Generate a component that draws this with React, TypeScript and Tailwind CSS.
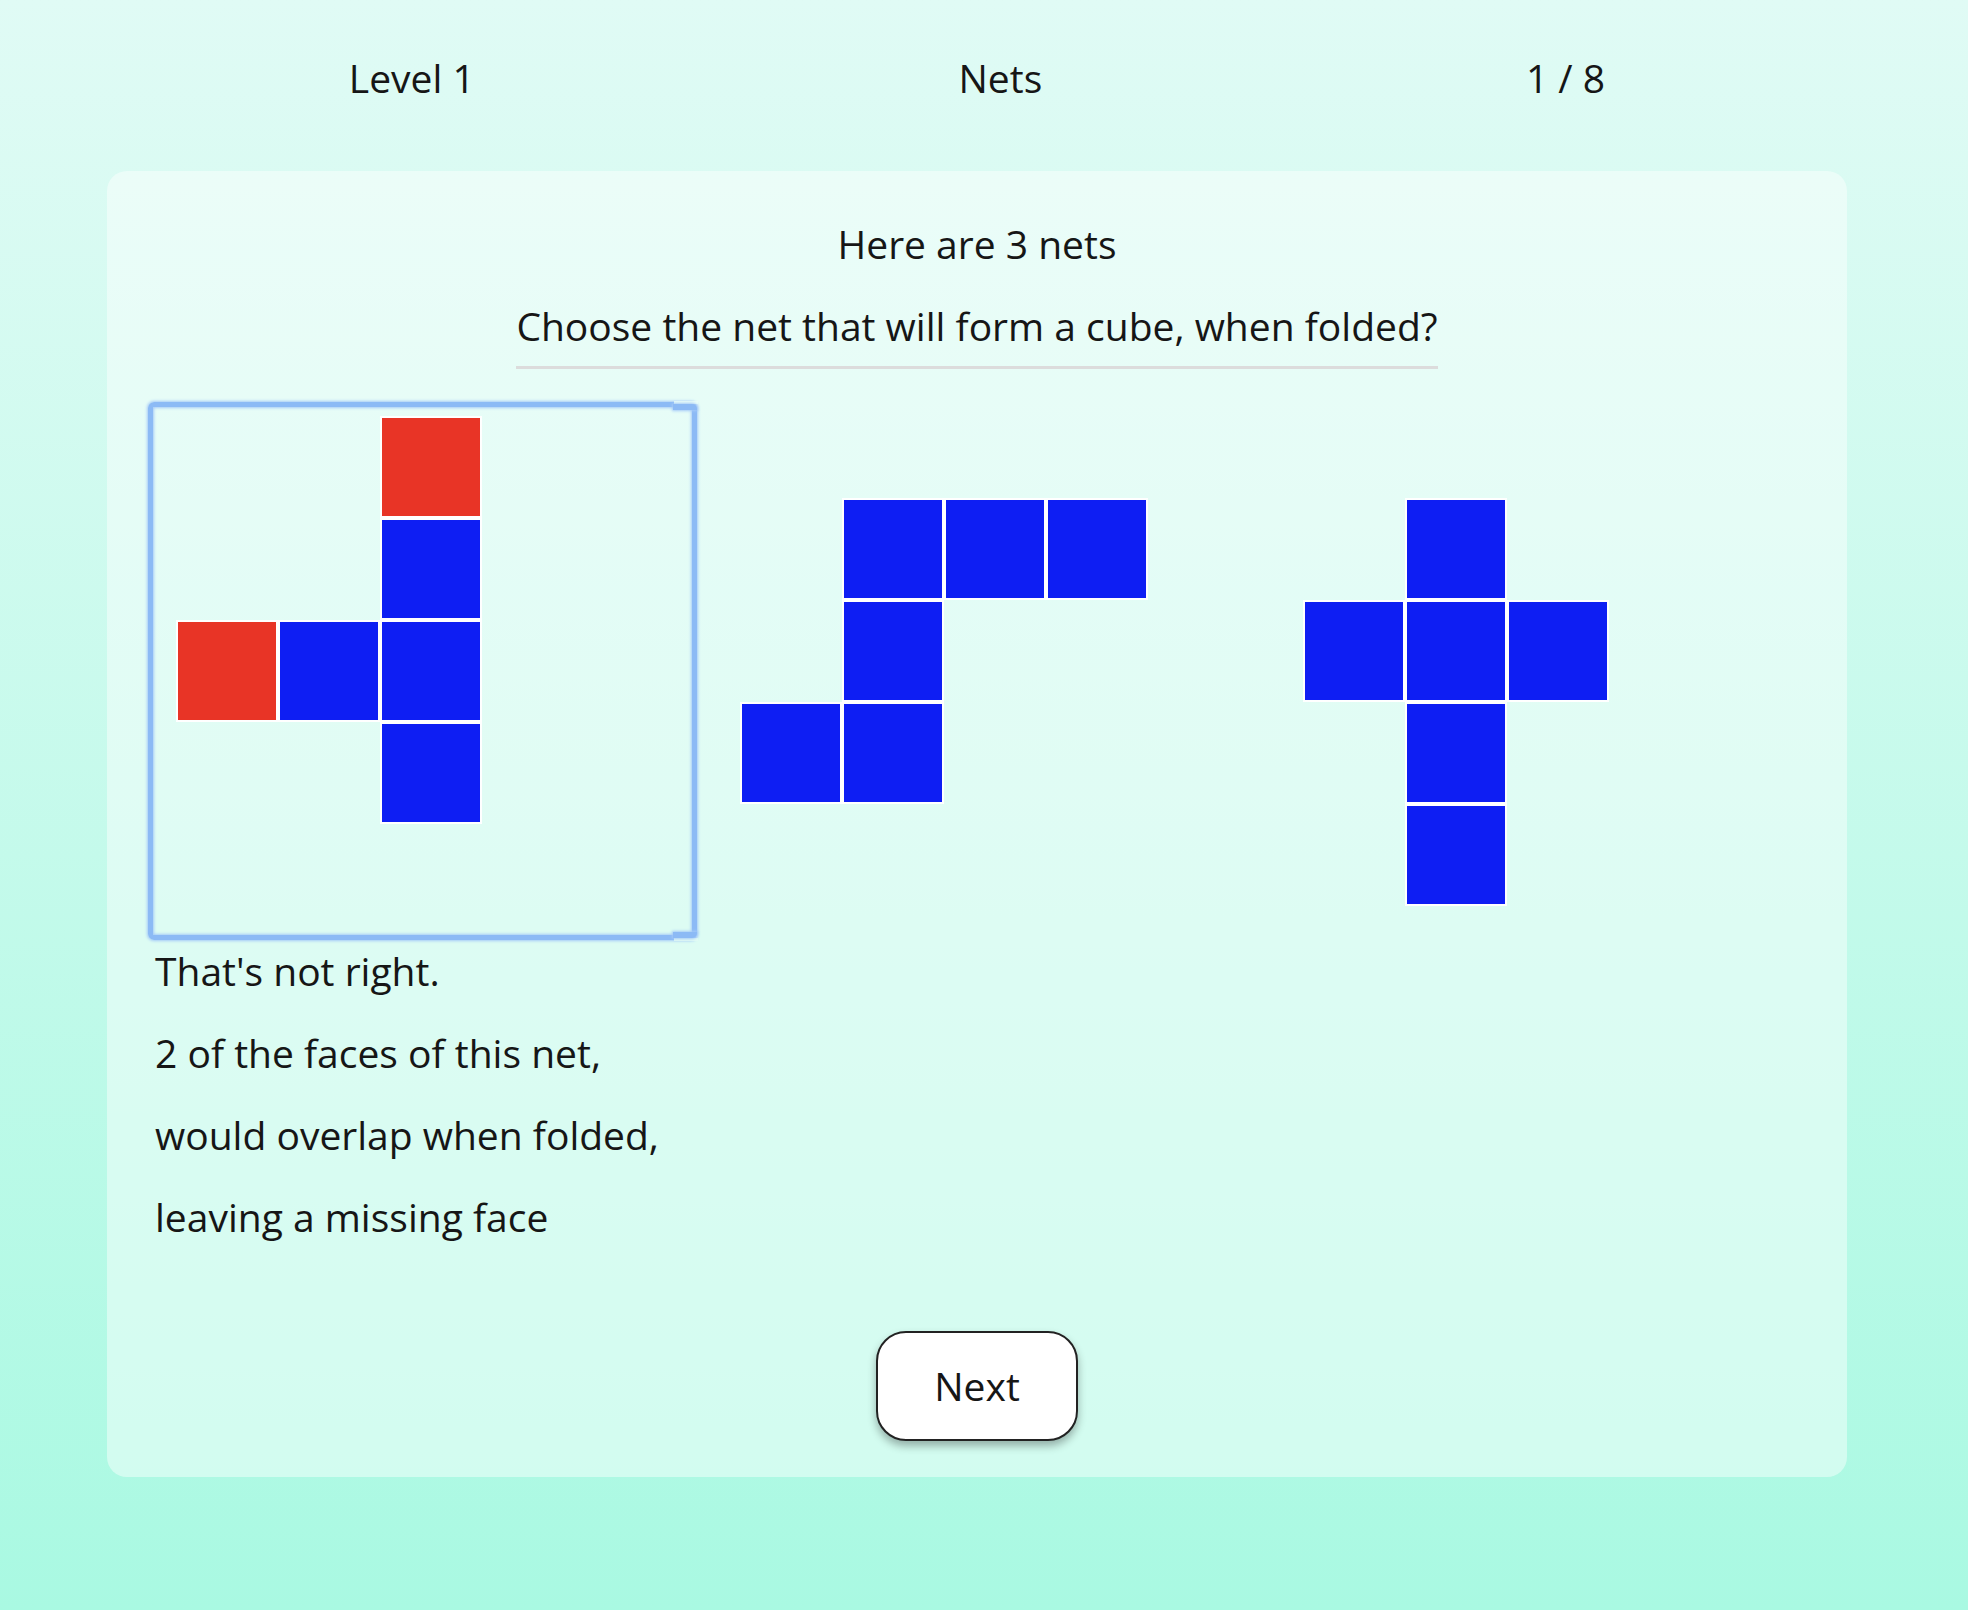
const colStart = ['col-start-1', 'col-start-2', 'col-start-3', 'col-start-4']
const rowStart = ['row-start-1', 'row-start-2', 'row-start-3', 'row-start-4']

type Face = [number, number, boolean?]

const nets: { cols: string; rows: string; faces: Face[] }[] = [
    {
        cols: 'grid-cols-[repeat(3,98px)]',
        rows: 'grid-rows-[repeat(4,98px)]',
        faces: [[2, 0, true], [2, 1], [0, 2, true], [1, 2], [2, 2], [2, 3]],
    },
    {
        cols: 'grid-cols-[repeat(4,98px)]',
        rows: 'grid-rows-[repeat(3,98px)]',
        faces: [[1, 0], [2, 0], [3, 0], [1, 1], [0, 2], [1, 2]],
    },
    {
        cols: 'grid-cols-[repeat(3,98px)]',
        rows: 'grid-rows-[repeat(4,98px)]',
        faces: [[1, 0], [0, 1], [1, 1], [2, 1], [1, 2], [1, 3]],
    },
]

const Net = ({ index }: { index: number }) => {
    const net = nets[index]
    return (
        <div className={`grid gap-[4px] ${net.cols} ${net.rows}`}>
            {net.faces.map(([c, r, red], i) => (
                <div
                    key={i}
                    className={`${colStart[c]} ${rowStart[r]} ring-2 ring-white ${red ? 'bg-[#e83426]' : 'bg-[#0e1ef3]'}`}
                />
            ))}
        </div>
    )
}

const App = () => {
    return (
        <div className="min-h-[1610px] w-full bg-gradient-to-b from-[#e0fbf5] to-[#a9f9e2] font-['Open_Sans','Lato',sans-serif] text-[#161616]">
            <header className="ml-[107px] w-[1740px] flex justify-around pt-[56px] text-[39px] leading-[44px]">
                <span>Level 1</span>
                <span>Nets</span>
                <span>1 / 8</span>
            </header>

            <main className="ml-[107px] mt-[71px] w-[1740px] rounded-[20px] bg-white/45 pt-[51px] pb-[36px] flex flex-col">
                <h2 className="text-center text-[39px] leading-[44px]">Here are 3 nets</h2>
                <div className="flex justify-center mt-[38px]">
                    <p className="text-[39px] leading-[44px] pb-[18px] border-b-[3px] border-[#dcdcdc]">
                        Choose the net that will form a cube, when folded?
                    </p>
                </div>

                <div className="flex items-start pl-[41px] mt-[33px]">
                    <button className="relative w-[549px] h-[538px] border-[5px] border-[#8cbaf5] rounded-[6px] shadow-[0_0_3px_1px_#a4c9f8,inset_0_0_3px_1px_#a4c9f8] pl-[25px] pt-[11px] flex items-start justify-start">
                        {/* focus ring step at the right corners */}
                        <span className="absolute -top-[6px] -right-[6px] w-[24px] h-[3px] bg-[#e9fdf8]" />
                        <span className="absolute -top-[3px] -right-[5px] w-[24px] h-[6px] rounded-tr-[5px] bg-[#8cbaf5] shadow-[0_0_3px_1px_#a4c9f8]" />
                        <span className="absolute -bottom-[6px] -right-[6px] w-[24px] h-[3px] bg-[#e2fbf4]" />
                        <span className="absolute -bottom-[3px] -right-[5px] w-[24px] h-[6px] rounded-br-[5px] bg-[#8cbaf5] shadow-[0_0_3px_1px_#a4c9f8]" />
                        <Net index={0} />
                    </button>
                    <div className="ml-[45px] mt-[98px]">
                        <Net index={1} />
                    </div>
                    <div className="ml-[159px] mt-[98px]">
                        <Net index={2} />
                    </div>
                </div>

                <div className="pl-[48px] flex flex-col gap-[20px] text-[39px] leading-[62px]">
                    <p>That's not right.</p>
                    <p>2 of the faces of this net,</p>
                    <p>would overlap when folded,</p>
                    <p>leaving a missing face</p>
                </div>

                <div className="flex justify-center mt-[83px]">
                    <button className="w-[202px] h-[110px] rounded-[30px] border-2 border-[#222] bg-white text-[39px] shadow-[0_5px_8px_rgba(0,0,0,0.3)]">
                        Next
                    </button>
                </div>
            </main>
        </div>
    )
}

export default App
